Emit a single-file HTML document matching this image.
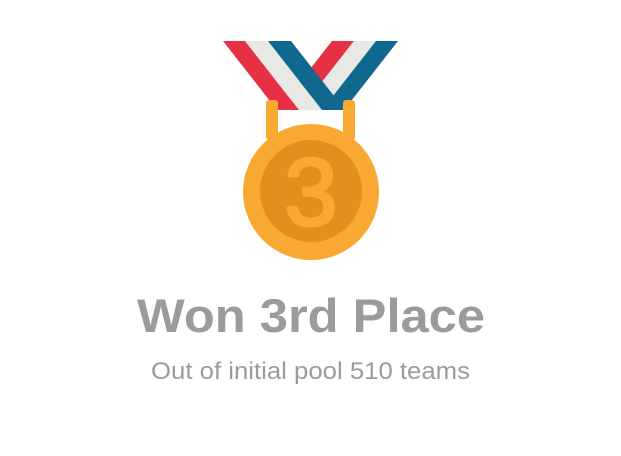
<!DOCTYPE html>
<html><head><meta charset="utf-8"><style>
html,body{margin:0;padding:0;background:#fff;width:621px;height:456px;overflow:hidden}
svg{display:block}
</style></head><body>
<svg width="621" height="456" viewBox="0 0 621 456" xmlns="http://www.w3.org/2000/svg">
  <!-- right ribbon (behind) -->
  <polygon points="332,41 354,41 300,110 278,110" fill="#E63145"/>
  <polygon points="354,41 376,41 322,110 300,110" fill="#E8E8E4"/>
  <polygon points="376,41 398,41 344,110 322,110" fill="#11688F"/>
  <!-- left ribbon (front) -->
  <polygon points="223,41 245,41 299,110 277,110" fill="#E63145"/>
  <polygon points="245,41 268,41 322,110 299,110" fill="#E8E8E4"/>
  <polygon points="268,41 291,41 345,110 322,110" fill="#11688F"/>
  <!-- bail -->
  <rect x="266" y="100" width="12" height="40" rx="3" fill="#F9A932"/>
  <rect x="343" y="100" width="12" height="40" rx="3" fill="#F9A932"/>
  <!-- medal -->
  <circle cx="311" cy="192" r="68" fill="#F9A932"/>
  <circle cx="311" cy="191" r="51" fill="#E0901C"/>
  <text x="311" y="225" text-anchor="middle" font-family="Liberation Sans, sans-serif" font-size="96" fill="#F9A932" stroke="#F9A932" stroke-width="3" stroke-linejoin="round">3</text>
  <!-- texts -->
  <text x="137" y="332" font-family="Liberation Sans, sans-serif" font-weight="bold" font-size="47" fill="#9B9B9B" textLength="348" lengthAdjust="spacingAndGlyphs">Won 3rd Place</text>
  <text x="151" y="379" font-family="Liberation Sans, sans-serif" font-size="24" fill="#9B9B9B" textLength="319" lengthAdjust="spacingAndGlyphs">Out of initial pool 510 teams</text>
</svg>
</body></html>
